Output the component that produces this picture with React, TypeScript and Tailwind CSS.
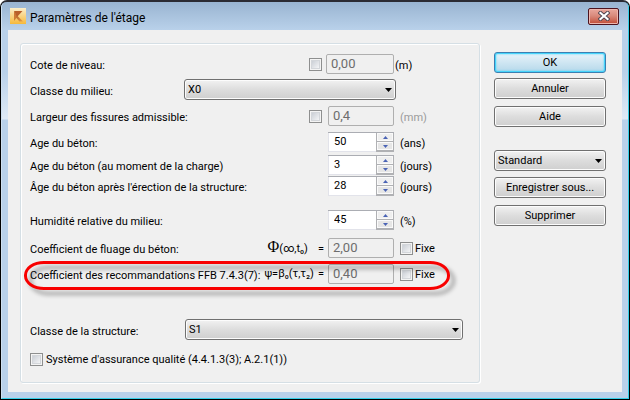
import React, { useState } from 'react';

const TEXT_FIELD = 'h-5 px-1 pb-0.5 rounded-[2px] border border-[#afafaf] bg-[#f0f0f0] text-[13px] text-[#6d6d6d]';
const BUTTON = 'h-[21px] w-full rounded-[3px] border border-[#707070] bg-linear-to-b from-[#f2f2f2] from-0% via-[#dddddd] via-50% to-[#cfcfcf] shadow-[inset_0_0_0_1px_#fcfcfc] text-center';

const Row: React.FC<{ className?: string; label: string; htmlFor: string; children: React.ReactNode }> = ({ className = '', label, htmlFor, children }) => (
  <div className={`flex items-center pl-2 ${className}`}>
    <label htmlFor={htmlFor} className="flex-1 pt-1 whitespace-nowrap">{label}</label>
    {children}
  </div>
);

const Unit: React.FC<{ children: React.ReactNode }> = ({ children }) => (
  <span className="w-[78px] ml-1.5 pt-1 shrink-0">{children}</span>
);

const CheckBox: React.FC<{ id: string; label?: string }> = ({ id, label }) => {
  const [checked, setChecked] = useState(false);

  return (
    <input
      id={id}
      type="checkbox"
      aria-label={label}
      checked={checked}
      onChange={(e) => setChecked(e.target.checked)}
      className="appearance-none size-[13px] shrink-0 border border-[#8e8f8f] bg-linear-to-br from-[#c0c5cd] to-[#ffffff] shadow-[inset_0_0_0_1px_#f4f4f4,inset_0_0_0_2px_#d3d6da] checked:from-[#3b5a9a]"
    />
  );
};

const Select: React.FC<{ id: string; label?: string; options: string[]; className: string }> = ({ id, label, options, className }) => (
  <div className={`relative ${className}`}>
    <select
      id={id}
      aria-label={label}
      className="appearance-none block h-[21px] w-full pl-[3px] rounded-[3px] border border-[#707070] bg-linear-to-b from-[#f2f2f2] from-0% via-[#dddddd] via-50% to-[#cfcfcf] shadow-[inset_0_0_0_1px_#fcfcfc]"
    >
      {options.map((o) => <option key={o}>{o}</option>)}
    </select>
    <svg viewBox="0 0 7 4" className="absolute right-1 top-[9px] w-[7px] h-1 pointer-events-none">
      <path d="M0 0h7L3.5 4z" fill="#000" />
    </svg>
  </div>
);

const SpinBox: React.FC<{ id: string; initial: number }> = ({ id, initial }) => {
  const [value, setValue] = useState(initial);

  return (
    <div className="flex h-5 w-[66px] shrink-0 border-t border-[#abadb3] bg-white">
      <input
        id={id}
        type="text"
        value={value}
        onChange={(e) => setValue(Number(e.target.value) || 0)}
        className="min-w-0 flex-1 pl-[5px] border-l border-b border-[#e2e3ea]"
      />
      <div className="flex flex-col w-[18px] border border-t-0 border-b-2 border-[#b0b1b4] divide-y divide-[#b0b1b4]">
        <button type="button" aria-label="Augmenter" onClick={() => setValue(value + 1)} className="flex flex-1 items-center justify-center bg-[#efefef] shadow-[inset_0_0_0_1px_#fafafa]">
          <svg viewBox="0 0 5 3" className="w-[5px] h-[3px]"><path d="M0 3h5L2.5 0z" fill="#4a63b5" /></svg>
        </button>
        <button type="button" aria-label="Diminuer" onClick={() => setValue(value - 1)} className="flex flex-1 items-center justify-center bg-[#e6e6e6] shadow-[inset_0_0_0_1px_#fafafa]">
          <svg viewBox="0 0 5 3" className="w-[5px] h-[3px]"><path d="M0 0h5L2.5 3z" fill="#4a63b5" /></svg>
        </button>
      </div>
    </div>
  );
};

const Fixed: React.FC<{ id: string }> = ({ id }) => (
  <div className="flex items-center gap-0.5 w-[78px] ml-1.5 shrink-0">
    <CheckBox id={id} />
    <label htmlFor={id} className="pt-px">Fixe</label>
  </div>
);

const App: React.FC = () => {
  return (
    <div className="min-h-screen bg-white text-black text-[11px] leading-4 font-['Roboto','DejaVu_Sans_Condensed',sans-serif]">
      <div className="flex flex-col min-h-screen rounded-t-[7px] border border-black border-t-[#2b2b33] border-t-2 bg-[linear-gradient(180deg,#99b4d1_0,#b9d1ea_28px,#b9d1ea_70px,#dfeaf6_117px,#b9d1ea_118px)] overflow-hidden">
        <div className="flex flex-col flex-1 rounded-t-[5px] border border-t-0 border-[#cfe0f0] border-r-[#35cfe8] border-b-[#35cfe8] px-1.5 pb-1.5">
          <header className="flex items-center h-7 pl-0.5 pr-[3px]">
            <svg viewBox="0 0 16 16" className="size-4 mr-1">
              <defs>
                <linearGradient id="tile" x1="0" y1="0" x2="0" y2="1">
                  <stop offset="0" stopColor="#fbeecb" />
                  <stop offset="1" stopColor="#f6b93b" />
                </linearGradient>
                <linearGradient id="leg" x1="0" y1="0" x2="1" y2="1">
                  <stop offset="0" stopColor="#b5622a" />
                  <stop offset="1" stopColor="#e6a04a" />
                </linearGradient>
              </defs>
              <rect width="16" height="16" fill="url(#tile)" />
              <path d="M4 3v10l3.5-4.5z" fill="#cf7a34" />
              <path d="M4 3h8.5L7 9z" fill="#b9602a" />
              <path d="M7 7.5L13 13.5H9.5L6 9.5z" fill="url(#leg)" />
            </svg>
            <h1 className="flex-1 pt-1 text-[12px]">Paramètres de l'étage</h1>
            <button type="button" aria-label="Fermer" className="flex items-center justify-center w-[31px] h-[17px] rounded-[2px] border border-[#4d1420] bg-linear-to-b from-[#e9a79c] from-0% via-[#d98a7c] via-45% to-[#c04a35] shadow-[inset_0_0_0_1px_#eeb6ae]">
              <svg viewBox="0 0 12 10" className="w-3 h-2.5">
                <path d="M2.5 2l7 6M9.5 2l-7 6" stroke="#4f4550" strokeWidth="4" strokeLinecap="square" />
                <path d="M2.5 2l7 6M9.5 2l-7 6" stroke="#fff" strokeWidth="2.2" strokeLinecap="square" />
              </svg>
            </button>
          </header>

          <main className="flex flex-1 items-start bg-[#f0f0f0] pt-[13px] pl-3 pr-4 pb-2">
            <section className="flex-1 min-w-0 rounded-[3px] border border-[#d5dfe5] shadow-[inset_1px_1px_0_#fff,1px_1px_0_#fff] pt-2.5 pb-3.5 px-px">
              <Row label="Cote de niveau:" htmlFor="level">
                <CheckBox id="level-on" label="Activer la cote de niveau" />
                <input id="level" type="text" defaultValue="0,00" disabled className={`${TEXT_FIELD} w-[68px] ml-1`} />
                <span className="w-[84px] pl-px pt-1 shrink-0">(m)</span>
              </Row>
              <Row label="Classe du milieu:" htmlFor="exposure" className="mt-[5px]">
                <Select id="exposure" options={['X0', 'XC1', 'XC2', 'XC3']} className="w-[212px] mr-[82px]" />
              </Row>
              <Row label="Largeur des fissures admissible:" htmlFor="crack" className="mt-1.5">
                <CheckBox id="crack-on" label="Activer la largeur des fissures" />
                <input id="crack" type="text" defaultValue="0,4" disabled className={`${TEXT_FIELD} w-[66px] ml-1.5`} />
                <Unit><span className="text-[#9a9a9a]">(mm)</span></Unit>
              </Row>
              <Row label="Age du béton:" htmlFor="age" className="mt-1.5">
                <SpinBox id="age" initial={50} />
                <Unit>(ans)</Unit>
              </Row>
              <Row label="Age du béton (au moment de la charge)" htmlFor="age-load" className="mt-[3px]">
                <SpinBox id="age-load" initial={3} />
                <Unit>(jours)</Unit>
              </Row>
              <Row label="Âge du béton après l'érection de la structure:" htmlFor="age-built" className="mt-px">
                <SpinBox id="age-built" initial={28} />
                <Unit>(jours)</Unit>
              </Row>
              <Row label="Humidité relative du milieu:" htmlFor="humidity" className="mt-3.5">
                <SpinBox id="humidity" initial={45} />
                <Unit>(%)</Unit>
              </Row>
              <Row label="Coefficient de fluage du béton:" htmlFor="creep" className="mt-2">
                <span className="flex items-baseline mr-1">
                  <span className="text-[16px] font-['Liberation_Serif',serif]">Φ</span>
                  <span>(∞,t₀)</span>
                  <span className="ml-2.5">=</span>
                </span>
                <input id="creep" type="text" defaultValue="2,00" disabled className={`${TEXT_FIELD} w-[66px]`} />
                <Fixed id="creep-fixed" />
              </Row>
              <div className="relative mt-1.5">
                <Row label="Coefficient des recommandations FFB 7.4.3(7):" htmlFor="ffb">
                  <span className="flex items-baseline mr-1">
                    <span>ψ=β₀(τ,τ₂)</span>
                    <span className="ml-1">=</span>
                  </span>
                  <input id="ffb" type="text" defaultValue="0,40" disabled className={`${TEXT_FIELD} w-[66px]`} />
                  <Fixed id="ffb-fixed" />
                </Row>
                <div className="absolute left-0.5 right-7 -top-[3px] -bottom-1.5 rounded-[20px/14px] border-[3px] border-[#f80000] drop-shadow-[5px_5px_2px_rgba(0,0,0,0.35)] pointer-events-none" />
              </div>
              <Row label="Classe de la structure:" htmlFor="structure" className="mt-[35px]">
                <Select id="structure" options={['S1', 'S2', 'S3', 'S4']} className="w-[278px] mr-[15px]" />
              </Row>
              <div className="flex items-center gap-[3px] pl-2 mt-[11px]">
                <CheckBox id="quality" />
                <label htmlFor="quality" className="pt-px">Système d'assurance qualité (4.4.1.3(3); A.2.1(1))</label>
              </div>
            </section>

            <aside className="flex flex-col w-28 shrink-0 ml-3.5 pt-[9px]">
              <button type="button" className="h-[21px] rounded-[3px] border border-[#3c7fb1] bg-linear-to-b from-[#e9f4fa] from-0% via-[#cfe6f2] via-50% to-[#b5d8ea] shadow-[inset_0_0_0_1px_#46d4fb,inset_0_0_2px_1px_#46d4fb]">OK</button>
              <button type="button" className={`${BUTTON} mt-[5px]`}>Annuler</button>
              <button type="button" className={`${BUTTON} mt-[7px]`}>Aide</button>
              <Select id="preset" label="Configuration" options={['Standard']} className="mt-[23px]" />
              <button type="button" className={`${BUTTON} mt-1.5`}>Enregistrer sous...</button>
              <button type="button" className={`${BUTTON} mt-[7px]`}>Supprimer</button>
            </aside>
          </main>
        </div>
      </div>
    </div>
  );
};

export default App;
